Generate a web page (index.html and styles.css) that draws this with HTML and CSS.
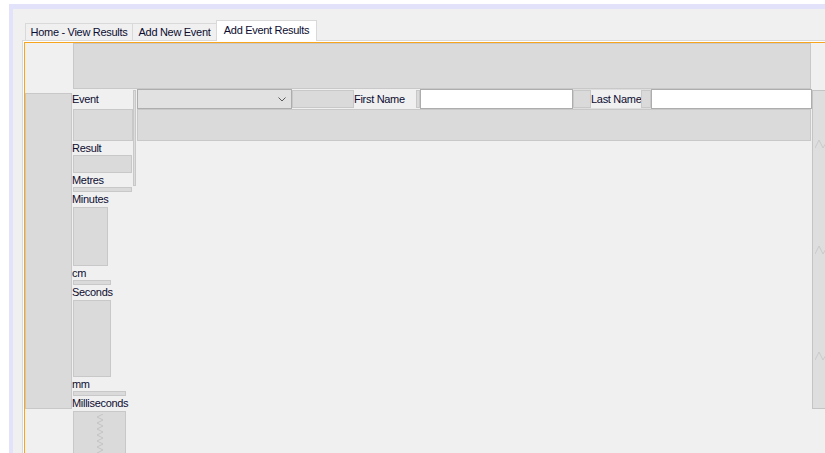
FILE: index.html
```html
<!DOCTYPE html>
<html>
<head>
<meta charset="utf-8">
<title>Add Event Results</title>
<link rel="stylesheet" href="styles.css">
</head>
<body>
<div class="frame">
  <div class="tabs">
    <div class="tab t1">Home - View Results</div>
    <div class="tab t2">Add New Event</div>
    <div class="tab t3 active">Add Event Results</div>
  </div>
  <div class="pane">
    <div class="hl">
      <div class="focus">
        <div class="box header"></div>
        <div class="main">
          <div class="box side"></div>
          <div class="labels">
            <div class="lbl lbl-event">Event</div>
            <div class="box b1"></div>
            <div class="lbl">Result</div>
            <div class="box b2"></div>
            <div class="lbl">Metres</div>
            <div class="box b3"></div>
            <div class="lbl tall">Minutes</div>
            <div class="box b4"></div>
            <div class="lbl">cm</div>
            <div class="box b5"></div>
            <div class="lbl tall">Seconds</div>
            <div class="box b6"></div>
            <div class="lbl">mm</div>
            <div class="box b7"></div>
            <div class="lbl tall">Milliseconds</div>
            <div class="box b8">
              <svg class="spring-v" width="9" height="44" viewBox="0 0 9 44"><polyline points="7,0 1,3 7,6 1,9 7,12 1,15 7,18 1,21 7,24 1,27 7,30 1,33 7,36 1,39 7,42" fill="none" stroke="#c4c4c4" stroke-width="1"/></svg>
            </div>
          </div>
          <div class="box vbar"></div>
          <div class="right">
            <div class="row1">
              <div class="combo">
                <svg width="8" height="5" viewBox="0 0 8 5"><polyline points="0.5,0.5 4,4 7.5,0.5" fill="none" stroke="#5a5a5a" stroke-width="1"/></svg>
              </div>
              <div class="box g1"></div>
              <div class="rlbl first-name">First Name</div>
              <div class="box g2"></div>
              <div class="input in1"></div>
              <div class="last-group">
                <div class="box g3"></div>
                <div class="rlbl last-name">Last Name</div>
                <div class="box g4"></div>
              </div>
              <div class="input in2"></div>
            </div>
            <div class="box wide"></div>
          </div>
          <div class="box scroll">
            <svg width="12" height="10" viewBox="0 0 12 10"><polyline points="0,9 4,1 8,9 12,2" fill="none" stroke="#cacaca" stroke-width="1"/></svg>
            <svg width="12" height="10" viewBox="0 0 12 10"><polyline points="0,9 4,1 8,9 12,2" fill="none" stroke="#cacaca" stroke-width="1"/></svg>
            <svg width="12" height="10" viewBox="0 0 12 10"><polyline points="0,9 4,1 8,9 12,2" fill="none" stroke="#cacaca" stroke-width="1"/></svg>
          </div>
        </div>
      </div>
    </div>
  </div>
</div>
</body>
</html>
```
FILE: styles.css
```css
* { box-sizing: border-box; }

html, body {
  margin: 0;
  padding: 0;
  background: #ffffff;
  overflow: hidden;
  height: 100%;
}

.frame {
  margin: 4px 0 0 9px;
  width: 840px;
  height: calc(100vh - 4px);
  border-top: 5px solid #e2e2fb;
  border-left: 4px solid #e2e2fb;
  background: #f0f0f0;
  font-family: "Liberation Sans", Arial, sans-serif;
  font-size: 11px;
  letter-spacing: -0.3px;
  color: #0c0c30;
  display: flex;
  flex-direction: column;
}

/* tabs */
.tabs {
  display: flex;
  align-items: flex-end;
  margin-top: 11px;
  padding-left: 12px;
  height: 20px;
  flex: none;
}

.tab {
  height: 17px;
  border: 1px solid #d9d9d9;
  border-bottom: none;
  background: #f0f0f0;
  line-height: 16px;
  text-align: center;
  white-space: nowrap;
}

.t1 { width: 108px; }
.t2 { width: 85px; margin-left: -1px; }
.t3 { width: 101px; margin-left: -1px; }

.tab.active {
  height: 21px;
  margin-bottom: -1px;
  background: #ffffff;
  padding-top: 1px;
  position: relative;
  z-index: 1;
}

/* tab pane */
.pane {
  flex: 1;
  margin-left: 9px;
  border-top: 1px solid #d9d9d9;
  border-left: 1px solid #d9d9d9;
  display: flex;
  flex-direction: column;
}

.hl {
  flex: 1;
  border-top: 1px solid #ffffff;
  border-left: 1px solid #ffffff;
  display: flex;
  flex-direction: column;
}

.focus {
  flex: 1;
  border-top: 1px solid #f7a51d;
  border-left: 1px solid #f7a51d;
  display: flex;
  flex-direction: column;
}

.box {
  background: #dadada;
  border: 1px solid #c8c8c8;
  flex: none;
}

.header {
  margin-left: 48px;
  width: 738px;
  height: 46px;
}

.main {
  display: flex;
  align-items: flex-start;
}

.side {
  margin-top: 4px;
  width: 47px;
  height: 316px;
}

/* label column */
.labels {
  width: 61px;
  flex: none;
  display: flex;
  flex-direction: column;
  align-items: flex-start;
}

.lbl {
  height: 14px;
  line-height: 14px;
  white-space: nowrap;
}
.lbl.tall { height: 15px; line-height: 15px; }
.lbl-event { height: 20px; line-height: 20px; }

.labels .box { margin-left: 1px; }
.b1 { width: 60px; height: 32px; }
.b2 { width: 59px; height: 18px; }
.b3 { width: 59px; height: 5px; }
.b4 { width: 35px; height: 59px; }
.b5 { width: 38px; height: 5px; }
.b6 { width: 38px; height: 77px; }
.b7 { width: 53px; height: 5px; }
.b8 {
  width: 53px;
  height: 60px;
  display: flex;
  padding: 2px 0 0 22px;
}

.vbar {
  margin-top: 1px;
  margin-right: 1px;
  width: 3px;
  height: 96px;
  background: #dcdcdc;
}

/* right area */
.right {
  width: 675px;
  flex: none;
  display: flex;
  flex-direction: column;
}

.row1 {
  display: flex;
  align-items: flex-start;
  height: 20px;
}

.combo {
  width: 155px;
  height: 20px;
  flex: none;
  background: #e1e1e1;
  border: 1px solid #adadad;
  display: flex;
  align-items: center;
  justify-content: flex-end;
  padding: 0 5px 0 0;
}

.combo svg { display: block; }

.g1 { width: 62px; height: 18px; margin-top: 1px; }
.g2 { width: 4px; height: 18px; margin-top: 1px; }

.last-group {
  flex: none;
  display: flex;
  align-items: flex-start;
  width: 78px;
  height: 20px;
  border-top: 1px solid #dedede;
  border-bottom: 1px solid #dedede;
}
.g3 { width: 18px; height: 18px; }
.g4 { width: 10px; height: 18px; }

.rlbl {
  flex: none;
  line-height: 20px;
  height: 20px;
  white-space: nowrap;
}
.last-group .rlbl { line-height: 18px; height: 18px; }
.first-name { width: 62px; }
.last-name { width: 50px; }

.input {
  flex: none;
  height: 20px;
  background: #ffffff;
  border: 1px solid #adadad;
}
.in1 { width: 153px; }
.in2 { width: 161px; }

.wide {
  width: 674px;
  height: 32px;
}

.scroll {
  margin-top: 1px;
  width: 17px;
  height: 319px;
  background: #dedede;
  border-color: #c4c4c4;
  display: flex;
  flex-direction: column;
  gap: 96px;
  padding: 48px 0 0 2px;
}
.scroll svg { display: block; }
```
